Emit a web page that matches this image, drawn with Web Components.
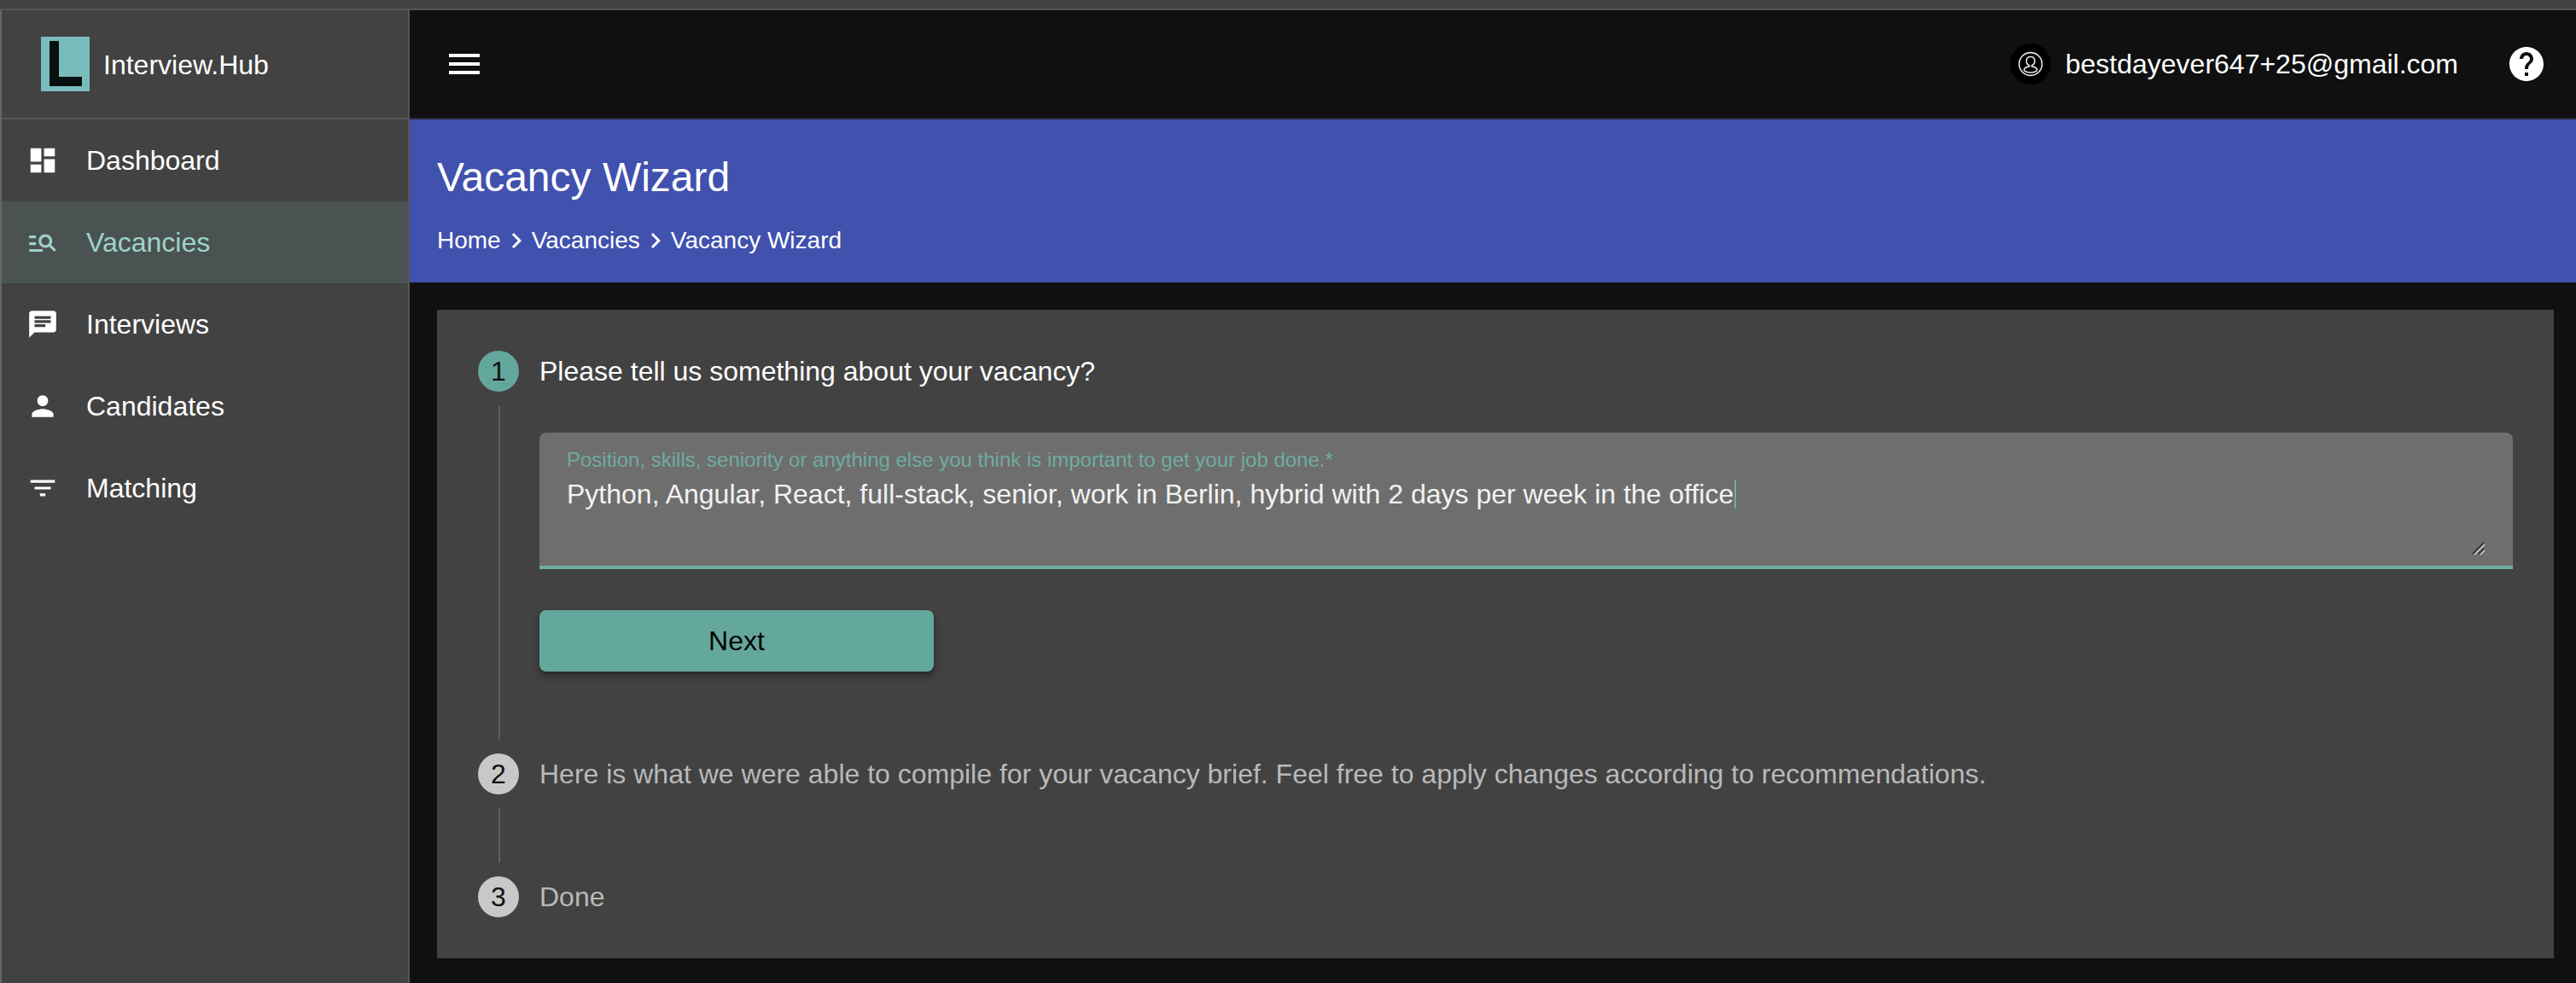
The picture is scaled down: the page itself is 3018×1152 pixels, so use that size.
<!DOCTYPE html>
<html lang="en">
<head>
<meta charset="utf-8">
<title>Interview.Hub</title>
<style>
  html, body { margin: 0; height: 100%; background: #101010; }
  body { font-family: "Liberation Sans", Arial, sans-serif; color: #fff; overflow: hidden; }
</style>
</head>
<body>
<app-shell>
  <side-nav slot="nav">
    <nav-item icon="dashboard">Dashboard</nav-item>
    <nav-item icon="search" active>Vacancies</nav-item>
    <nav-item icon="chat">Interviews</nav-item>
    <nav-item icon="person">Candidates</nav-item>
    <nav-item icon="filter">Matching</nav-item>
  </side-nav>
  <top-bar slot="top" email="bestdayever647+25@gmail.com"></top-bar>
  <page-banner slot="banner" heading="Vacancy Wizard" crumbs="Home|Vacancies|Vacancy Wizard"></page-banner>
  <wizard-card slot="main">
    <wizard-step number="1" label="Please tell us something about your vacancy?" active>
      <vacancy-field label="Position, skills, seniority or anything else you think is important to get your job done.*">Python, Angular, React, full-stack, senior, work in Berlin, hybrid with 2 days per week in the office</vacancy-field>
      <next-button>Next</next-button>
    </wizard-step>
    <wizard-step number="2" label="Here is what we were able to compile for your vacancy brief. Feel free to apply changes according to recommendations."></wizard-step>
    <wizard-step number="3" label="Done" last></wizard-step>
  </wizard-card>
</app-shell>

<script>
(function registerInterviewHub() {
  'use strict';

  const ICONS = {
    dashboard: 'M3 13h8V3H3v10zm0 8h8v-6H3v6zm10 0h8V11h-8v10zm0-18v6h8V3h-8z',
    search: 'M7 9H2V7h5v2zm0 3H2v2h5v-2zm13.59 7l-3.83-3.83c-.8.52-1.74.83-2.76.83-2.76 0-5-2.24-5-5s2.24-5 5-5 5 2.24 5 5c0 1.02-.31 1.96-.83 2.75L22 17.59 20.59 19zM17 11c0-1.65-1.35-3-3-3s-3 1.35-3 3 1.35 3 3 3 3-1.35 3-3zM2 19h10v-2H2v2z',
    chat: 'M20 2H4c-1.1 0-1.99.9-1.99 2L2 22l4-4h14c1.1 0 2-.9 2-2V4c0-1.1-.9-2-2-2zM6 9h12v2H6V9zm8 5H6v-2h8v2zm4-6H6V6h12v2z',
    person: 'M12 12c2.21 0 4-1.79 4-4s-1.79-4-4-4-4 1.79-4 4 1.79 4 4 4zm0 2c-2.67 0-8 1.34-8 4v2h16v-2c0-2.66-5.33-4-8-4z',
    filter: 'M10 18h4v-2h-4v2zM3 6v2h18V6H3zm3 7h12v-2H6v2z',
    menu: 'M3 18h18v-2H3v2zm0-5h18v-2H3v2zm0-7v2h18V6H3z',
    help: 'M12 2C6.48 2 2 6.48 2 12s4.48 10 10 10 10-4.48 10-10S17.52 2 12 2zm1 17h-2v-2h2v2zm2.07-7.75l-.9.92C13.45 12.9 13 13.5 13 15h-2v-.5c0-1.1.45-2.1 1.17-2.83l1.24-1.26c.37-.36.59-.86.59-1.41 0-1.1-.9-2-2-2s-2 .9-2 2H8c0-2.21 1.79-4 4-4s4 1.79 4 4c0 .88-.36 1.68-.93 2.25z',
    chevron: 'M10 6L8.59 7.41 13.17 12l-4.58 4.59L10 18l6-6z'
  };

  function icon(name, size) {
    return `<svg width="${size}" height="${size}" viewBox="0 0 24 24" fill="currentColor" aria-hidden="true"><path d="${ICONS[name]}"/></svg>`;
  }

  class AppShell extends HTMLElement {
    constructor() {
      super();
      this.attachShadow({ mode: 'open' });
      this.shadowRoot.innerHTML = `
        <style>
          :host { display: flex; flex-direction: column; width: 3018px; height: 1152px; overflow: hidden; }
          .strip { flex: none; height: 10px; background: #424242; border-bottom: 2px solid #555; }
          .row { flex: 1; min-height: 0; display: flex; }
          .nav { flex: none; width: 480px; box-sizing: border-box; background: #424242;
                 border-left: 2px solid #666; border-right: 2px solid #555; }
          .content { flex: 1; min-width: 0; display: flex; flex-direction: column; }
          .main { padding: 32px 26px 29px 32px; }
        </style>
        <div class="strip"></div>
        <div class="row">
          <div class="nav"><slot name="nav"></slot></div>
          <div class="content">
            <slot name="top"></slot>
            <slot name="banner"></slot>
            <div class="main"><slot name="main"></slot></div>
          </div>
        </div>
      `;
    }
  }

  class SideNav extends HTMLElement {
    constructor() {
      super();
      this.attachShadow({ mode: 'open' });
      this.shadowRoot.innerHTML = `
        <style>
          :host { display: block; }
          .brand { box-sizing: border-box; height: 128px; display: flex; align-items: center;
                   padding-left: 46px; border-bottom: 2px solid #555; }
          .logo { flex: none; display: block; margin-right: 16px; }
          .name { font-size: 32px; padding-top: 2px; color: #fff; }
        </style>
        <div class="brand">
          <svg class="logo" width="57" height="64" viewBox="0 0 57 64" aria-hidden="true">
            <rect width="57" height="64" fill="#78bcbb"/>
            <path d="M10 5h11v42h27v11H10z" fill="#07100f"/>
          </svg>
          <span class="name">Interview.Hub</span>
        </div>
        <slot></slot>
      `;
    }
  }

  class NavItem extends HTMLElement {
    constructor() {
      super();
      this.attachShadow({ mode: 'open' });
    }

    connectedCallback() {
      this.shadowRoot.innerHTML = `
        <style>
          :host { display: flex; align-items: center; height: 96px; box-sizing: border-box;
                  padding-left: 29px; font-size: 32px; color: #fff; }
          :host([active]) { background: #4a5352; color: #9fd3c8; }
          svg { flex: none; display: block; margin-right: 32px; }
        </style>
        ${icon(this.getAttribute('icon'), 38)}
        <slot></slot>
      `;
    }
  }

  class TopBar extends HTMLElement {
    constructor() {
      super();
      this.attachShadow({ mode: 'open' });
    }

    connectedCallback() {
      this.shadowRoot.innerHTML = `
        <style>
          :host { display: flex; align-items: center; flex: none; height: 126px; box-sizing: content-box;
                  background: #101010; border-bottom: 2px solid #2a2a34; padding: 0 34px 0 40px; }
          .menu, .help { display: block; color: #fff; }
          .menu svg, .help svg { display: block; }
          .spacer { flex: 1; }
          .avatar { width: 48px; height: 48px; border-radius: 50%; background: #000;
                    display: flex; align-items: center; justify-content: center; margin-right: 17px; }
          .email { font-size: 32px; margin-right: 56px; }
        </style>
        <span class="menu">${icon('menu', 48)}</span>
        <span class="spacer"></span>
        <span class="avatar">
          <svg width="30" height="30" viewBox="0 0 30 30" fill="none" stroke="#e4e4e4" stroke-width="1.6" aria-hidden="true">
            <circle cx="15" cy="15" r="13.4"/>
            <path d="M15 6.5c-3 0-4.8 2.2-4.8 5 0 2.4 1.3 4.4 3.3 5v1.4c-3.2.6-6 2-6.2 3.9.2 1.6 3.4 3.2 7.7 3.2s7.5-1.6 7.7-3.2c-.2-1.9-3-3.3-6.2-3.9v-1.4c2-.6 3.3-2.6 3.3-5 0-2.8-1.8-5-4.8-5z"/>
          </svg>
        </span>
        <span class="email">${this.getAttribute('email')}</span>
        <span class="help">${icon('help', 48)}</span>
      `;
    }
  }

  class PageBanner extends HTMLElement {
    constructor() {
      super();
      this.attachShadow({ mode: 'open' });
    }

    connectedCallback() {
      const crumbs = (this.getAttribute('crumbs') || '').split('|');
      const trail = crumbs.map((c) => `<span>${c}</span>`).join(`<i>${icon('chevron', 36)}</i>`);
      this.shadowRoot.innerHTML = `
        <style>
          :host { display: block; flex: none; height: 191px; box-sizing: border-box; background: #4051ae;
                  padding: 41px 32px 0 32px; color: #fff; }
          h1 { margin: 0; font-size: 48px; font-weight: 400; line-height: 54px; }
          .crumbs { display: flex; align-items: center; margin-top: 29px; font-size: 28px; line-height: 34px; }
          i { display: block; width: 36px; height: 36px; }
          svg { display: block; }
        </style>
        <h1>${this.getAttribute('heading')}</h1>
        <div class="crumbs">${trail}</div>
      `;
    }
  }

  class WizardCard extends HTMLElement {
    constructor() {
      super();
      this.attachShadow({ mode: 'open' });
      this.shadowRoot.innerHTML = `
        <style>
          :host { display: block; background: #424242; box-sizing: border-box; height: 760px;
                  padding: 48px 48px 0 48px; }
        </style>
        <slot></slot>
      `;
    }
  }

  class WizardStep extends HTMLElement {
    constructor() {
      super();
      this.attachShadow({ mode: 'open' });
    }

    connectedCallback() {
      this.shadowRoot.innerHTML = `
        <style>
          :host { display: block; }
          .head { display: flex; align-items: center; height: 48px; }
          .dot { flex: none; width: 48px; height: 48px; border-radius: 50%; background: #c8c8c8;
                 color: #111; font-size: 32px; display: flex; align-items: center; justify-content: center;
                 margin-right: 24px; }
          .label { font-size: 32px; color: #b9b9b9; white-space: nowrap; }
          :host([active]) .dot { background: #64a79c; }
          :host([active]) .label { color: #fff; }
          .body { display: flex; margin-top: 16px; min-height: 64px; margin-bottom: 16px; }
          :host([active]) .body { min-height: 392px; }
          .rail { flex: none; width: 2px; margin-left: 24px; background: #5f5f5f; margin-right: 46px; }
          .inner { flex: 1; min-width: 0; padding-top: 32px; display: flex; flex-direction: column; }
          :host([last]) .body { display: none; }
        </style>
        <div class="head">
          <span class="dot">${this.getAttribute('number')}</span>
          <span class="label">${this.getAttribute('label')}</span>
        </div>
        <div class="body">
          <span class="rail"></span>
          <div class="inner"><slot></slot></div>
        </div>
      `;
    }
  }

  class VacancyField extends HTMLElement {
    constructor() {
      super();
      this.attachShadow({ mode: 'open' });
    }

    connectedCallback() {
      this.shadowRoot.innerHTML = `
        <style>
          :host { display: block; position: relative; height: 156px; box-sizing: content-box;
                  background: #6e6e6e; border-radius: 8px 8px 0 0; border-bottom: 4px solid #72ada2; }
          .wrap { padding: 18px 32px 0 32px; }
          .label { font-size: 24px; line-height: 28px; color: #6fab9f; }
          .value { font-size: 32px; line-height: 38px; margin-top: 7px; color: #f2f2f2; white-space: nowrap; }
          .caret { display: inline-block; width: 2px; height: 34px; background: #72ada2; vertical-align: -6px; margin-left: 1px; }
          .grip { position: absolute; right: 32px; bottom: 12px; display: block; }
        </style>
        <div class="wrap">
          <div class="label">${this.getAttribute('label')}</div>
          <div class="value"><slot></slot><span class="caret"></span></div>
        </div>
        <svg class="grip" width="16" height="16" viewBox="0 0 16 16" aria-hidden="true">
          <path d="M1 14L14 1M8 14l6-6" stroke="#222" stroke-width="1.4" fill="none"/>
          <path d="M3 15L15 3M10 15l5-5" stroke="#d4d4d4" stroke-width="1.4" fill="none"/>
        </svg>
      `;
    }
  }

  class NextButton extends HTMLElement {
    constructor() {
      super();
      this.attachShadow({ mode: 'open' });
      this.shadowRoot.innerHTML = `
        <style>
          :host { display: flex; align-items: center; justify-content: center; flex: none;
                  width: 462px; height: 72px; margin-top: 48px; border-radius: 8px;
                  background: #64a79c; color: #050505; font-size: 32px;
                  box-shadow: 0 6px 10px rgba(0, 0, 0, 0.28), 0 2px 4px rgba(0, 0, 0, 0.2); }
        </style>
        <slot></slot>
      `;
    }
  }

  customElements.define('app-shell', AppShell);
  customElements.define('side-nav', SideNav);
  customElements.define('nav-item', NavItem);
  customElements.define('top-bar', TopBar);
  customElements.define('page-banner', PageBanner);
  customElements.define('wizard-card', WizardCard);
  customElements.define('wizard-step', WizardStep);
  customElements.define('vacancy-field', VacancyField);
  customElements.define('next-button', NextButton);
})();
</script>
</body>
</html>
